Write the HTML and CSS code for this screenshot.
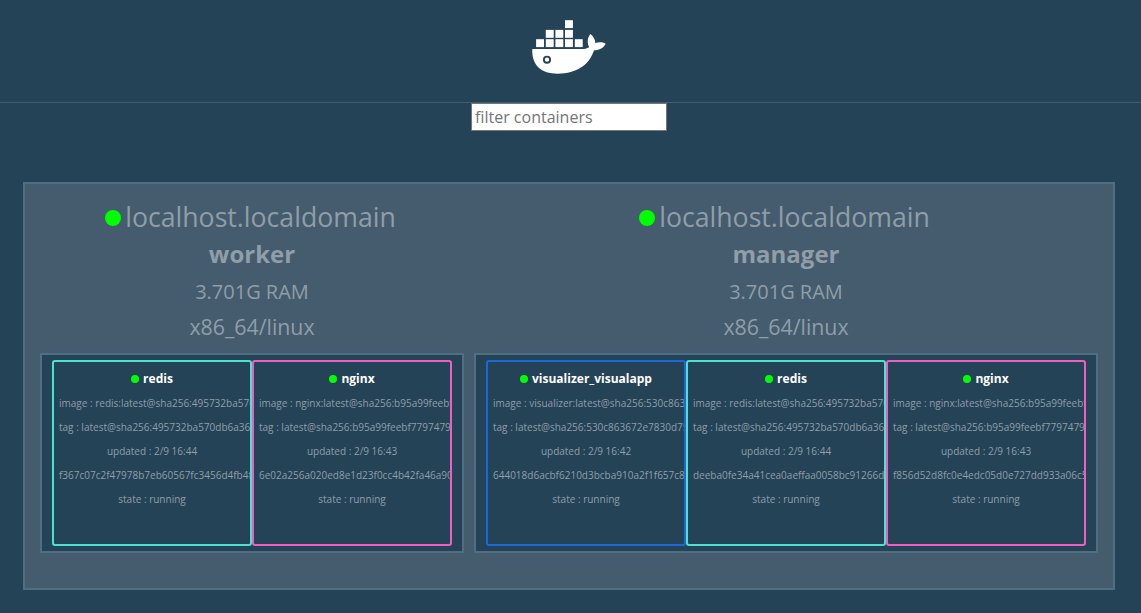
FILE: index.html
```
<!DOCTYPE html>
<html lang="en">
<head>
<meta charset="utf-8">
<title>Visualizer</title>
<link rel="stylesheet" href="styles.css">
</head>
<body>
<header class="header">
  <svg class="logo" width="76" height="56" viewBox="0 0 76 56" role="img" aria-label="Docker">
    <g fill="#fff">
      <rect x="34" y="1.200" width="7.900" height="7.900"/>
      <rect x="14.800" y="10.900" width="7.900" height="7.900"/><rect x="24.400" y="10.900" width="7.900" height="7.900"/><rect x="34" y="10.900" width="7.900" height="7.900"/>
      <rect x="5.100" y="20.200" width="7.900" height="7.900"/><rect x="14.800" y="20.200" width="7.900" height="7.900"/><rect x="24.400" y="20.200" width="7.900" height="7.900"/><rect x="34" y="20.200" width="7.900" height="7.900"/><rect x="43.800" y="20.200" width="7.900" height="7.900"/>
    </g>
    <path fill="#fff" d="M1.300 30H50c3.500 0 6-.5 8.200-1.800C55.800 23.500 56.500 18.500 59.300 15c3 2.200 4.900 5.200 5 8.900 3.500-1 7.300-.8 10.400.8-2.200 4.300-6 6.300-11.700 6.600C58.500 45.500 46 54.700 26.500 54.700 10.500 54.700.500 46.500 1.300 30Z"/>
    <circle cx="16" cy="40.700" r="3.100" fill="#fff" stroke="#254356" stroke-width="1.900"/>
  </svg>
</header>
<div class="filter"><input class="filter-input" type="text" placeholder="filter containers"></div>
<main class="cluster">
  <section class="node">
    <div class="node-info">
      <div class="node-name"><span class="node-dot"></span>localhost.localdomain</div>
      <div class="node-role">worker</div>
      <div class="node-ram">3.701G RAM</div>
      <div class="node-arch">x86_64/linux</div>
    </div>
    <div class="tasks">
      <article class="task teal"><h3 class="task-name"><span class="task-dot"></span>redis</h3><p>image : redis:latest@sha256:495732ba570</p><p>tag : latest@sha256:495732ba570db6a362</p><p class="mid">updated : 2/9 16:44</p><p>f367c07c2f47978b7eb60567fc3456d4fb4f6</p><p class="mid">state : running</p></article>
      <article class="task pink"><h3 class="task-name"><span class="task-dot"></span>nginx</h3><p>image : nginx:latest@sha256:b95a99feebf</p><p>tag : latest@sha256:b95a99feebf7797479e</p><p class="mid">updated : 2/9 16:43</p><p>6e02a256a020ed8e1d23f0cc4b42fa46a90</p><p class="mid">state : running</p></article>
    </div>
  </section>
  <section class="node">
    <div class="node-info">
      <div class="node-name"><span class="node-dot"></span>localhost.localdomain</div>
      <div class="node-role">manager</div>
      <div class="node-ram">3.701G RAM</div>
      <div class="node-arch">x86_64/linux</div>
    </div>
    <div class="tasks">
      <article class="task blue"><h3 class="task-name"><span class="task-dot"></span>visualizer_visualapp</h3><p>image : visualizer:latest@sha256:530c863</p><p>tag : latest@sha256:530c863672e7830d75</p><p class="mid">updated : 2/9 16:42</p><p>644018d6acbf6210d3bcba910a2f1f657c82</p><p class="mid">state : running</p></article>
      <article class="task teal"><h3 class="task-name"><span class="task-dot"></span>redis</h3><p>image : redis:latest@sha256:495732ba570</p><p>tag : latest@sha256:495732ba570db6a362</p><p class="mid">updated : 2/9 16:44</p><p>deeba0fe34a41cea0aeffaa0058bc91266d4</p><p class="mid">state : running</p></article>
      <article class="task pink"><h3 class="task-name"><span class="task-dot"></span>nginx</h3><p>image : nginx:latest@sha256:b95a99feebf</p><p>tag : latest@sha256:b95a99feebf7797479e</p><p class="mid">updated : 2/9 16:43</p><p>f856d52d8fc0e4edc05d0e727dd933a06c5</p><p class="mid">state : running</p></article>
    </div>
  </section>
</main>
</body>
</html>
```
FILE: styles.css
```
* { box-sizing: border-box; }
body { margin: 0; height: 613px; overflow: hidden; background: #254356; color: #8f9ea8; font-family: "Open Sans", sans-serif; }
.header { height: 103px; padding: 19px 0 0 531px; border-bottom: 1px solid #445d6e; }
.logo { display: block; }
.filter { display: flex; padding-left: 471px; height: 79px; }
.filter-input { width: 196px; height: 28px; padding: 1px 3px; border: 1px solid #767676; background: #fff; font: 16px "Open Sans", sans-serif; }
.filter-input::placeholder { color: #757575; }
.cluster { display: flex; gap: 10px; width: 1092px; height: 408px; margin-left: 23px; padding: 15px; border: 2px solid #4f6e84; background: #455c6e; }
.node-info { height: 154px; text-align: center; white-space: nowrap; }
.node-name { display: flex; align-items: center; justify-content: center; height: 36px; padding-right: 3px; font-size: 26.67px; line-height: 36px; }
.node-dot { width: 16px; height: 16px; margin: 2px 4px 0 0; border-radius: 50%; background: #0f0; }
.node-role { height: 38px; line-height: 37px; font-size: 24px; font-weight: 700; }
.node-ram { height: 36px; line-height: 38px; font-size: 20px; }
.node-arch { height: 36px; line-height: 36px; font-size: 21.33px; }
.tasks { display: flex; height: 200px; padding: 5px 10px; border: 2px solid #4f6e84; background: #254356; }
.task { width: 200px; height: 186px; padding: 5px; border: 2px solid; border-radius: 3px; overflow: hidden; background: #254356; }
.teal { border-color: #4be3d0; }
.pink { border-color: #ef5fc1; }
.blue { border-color: #1c68d8; }
.task-name { display: flex; align-items: flex-start; justify-content: center; height: 24px; margin: 0; color: #fff; font-size: 12px; line-height: 24px; }
.task-dot { width: 8px; height: 8px; margin: 8px 4px 0 0; border-radius: 50%; background: #0f0; }
.task p { margin: 0; height: 24px; line-height: 24px; font-size: 10px; white-space: nowrap; color: #8f9ea8; }
.task .mid { text-align: center; }
```
